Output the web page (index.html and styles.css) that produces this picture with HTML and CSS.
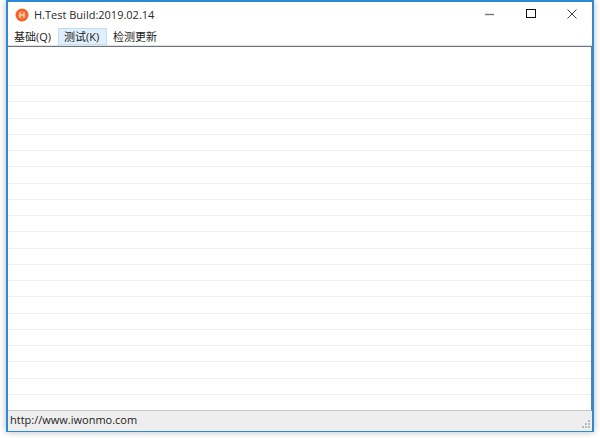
FILE: index.html
```
<!DOCTYPE html>
<html lang="zh">
<head>
<meta charset="utf-8">
<title>H.Test</title>
<link rel="stylesheet" href="styles.css">
</head>
<body>
<div class="window">
  <header class="titlebar">
    <svg class="app-icon" width="14" height="14" viewBox="0 0 14 14"><circle cx="7" cy="7" r="6.5" fill="#f4602a"/><circle cx="7" cy="7" r="4.4" fill="#f7763a"/><path d="M5 4.2v5.6M9 4.2v5.6M5 7h4" stroke="#ffe3d2" stroke-width="1.2" fill="none"/></svg>
    <span class="title">H.Test Build:2019.02.14</span>
    <div class="controls">
      <svg class="ctl" width="10" height="10" viewBox="0 0 10 10"><path d="M0 5.5h9" stroke="#777" stroke-width="1.4"/></svg>
      <svg class="ctl" width="10" height="10" viewBox="0 0 10 10"><rect x=".5" y=".5" width="9" height="8" fill="none" stroke="#111" stroke-width="1"/></svg>
      <svg class="ctl" width="10" height="10" viewBox="0 0 10 10"><path d="M.5 .5l9 9M9.5 .5l-9 9" stroke="#444" stroke-width="1"/></svg>
    </div>
  </header>
  <nav class="menu">
    <span class="item">基础(Q)</span>
    <span class="item active">测试(K)</span>
    <span class="item">检测更新</span>
  </nav>
  <main class="list">
    <div class="head"></div>
    <div class="row"></div><div class="row"></div><div class="row"></div><div class="row"></div><div class="row"></div>
    <div class="row"></div><div class="row"></div><div class="row"></div><div class="row"></div><div class="row"></div>
    <div class="row"></div><div class="row"></div><div class="row"></div><div class="row"></div><div class="row"></div>
    <div class="row"></div><div class="row"></div><div class="row"></div><div class="row"></div>
  </main>
  <footer class="status">
    <span class="url">http://www.iwonmo.com</span>
    <svg class="grip" width="12" height="12" viewBox="0 0 12 12" fill="#bbb"><rect x="8" y="1" width="2" height="2"/><rect x="5" y="4" width="2" height="2"/><rect x="8" y="4" width="2" height="2"/><rect x="2" y="7" width="2" height="2"/><rect x="5" y="7" width="2" height="2"/><rect x="8" y="7" width="2" height="2"/></svg>
  </footer>
</div>
</body>
</html>
```
FILE: styles.css
```
* { box-sizing: border-box; }
html, body { margin: 0; height: 438px; overflow: hidden; background: #fff; }
body { padding: 0 6px 6px 6px; font-family: "Open Sans", "Noto Sans CJK SC", sans-serif; font-size: 11px; color: #1c1c1c; }
.window {
  width: 588px; height: 432px; display: flex; flex-direction: column;
  background: #fff; border: 1px solid #2f8ad6; border-width: 2px 2px 1px 2px;
  box-shadow: 0 0 7px rgba(0,0,0,.28);
}
.titlebar { height: 25px; display: flex; align-items: center; padding-left: 7px; }
.app-icon { margin-right: 5px; flex: none; }
.title { color: #2a2a2a; }
.controls { margin-left: auto; display: flex; margin-top: -1px; }
.ctl { margin-left: 31px; }
.controls .ctl:last-child { margin-right: 15px; }
.menu { height: 19px; display: flex; align-items: center; border-bottom: 1px solid #e2e2e2; }
.item { width: 49px; height: 17px; line-height: 15px; padding: 0 0 0 5px; border: 1px solid transparent; white-space: nowrap; margin-top: 1px; }
.item:first-child { margin-right: 1px; }
.item.active { background: #dff0fc; border-color: #bfe0f8; }
.list { flex: 1; border-top: 1px solid #6b7380; border-bottom: 1px solid #c8c8c8; overflow: hidden; border-right: 1px solid #5a7fa8; }
.head { height: 39px; border-bottom: 1px solid #efefef; }
.row { height: 16.25px; border-bottom: 1px solid #efefef; }
.status { height: 20px; display: flex; align-items: center; justify-content: space-between; background: #eeeeee; padding-left: 2px; }
.url { line-height: 18px; margin-bottom: 2px; }
.grip { align-self: flex-end; }
```
